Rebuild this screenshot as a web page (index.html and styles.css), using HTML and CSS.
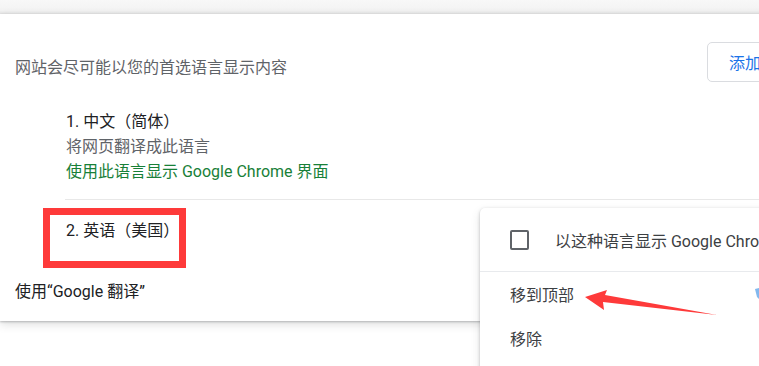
FILE: index.html
```html
<!DOCTYPE html>
<html lang="zh-CN">
<head>
    <meta charset="UTF-8">
    <title>语言</title>
    <link rel="stylesheet" href="styles.css">
</head>
<body>

    <div class="top-shadow"></div>

    <!-- 语言设置卡片 -->
    <div class="card">
        <div class="card-head">
            <p class="desc">网站会尽可能以您的首选语言显示内容</p>
            <button class="add-btn">添加语言</button>
        </div>

        <div class="lang-item first">
            <div class="lang-name">1. 中文（简体）</div>
            <div class="lang-sub">将网页翻译成此语言</div>
            <div class="lang-ui">使用此语言显示 Google Chrome 界面</div>
        </div>

        <div class="lang-item second">
            <div class="lang-name">2. 英语（美国）</div>
        </div>

        <div class="translate-row">使用“Google 翻译”</div>
    </div>

    <h2 class="next-title">拼写检查</h2>

    <!-- 红框标注 -->
    <div class="mark-box"></div>

    <!-- 下拉菜单 -->
    <div class="menu">
        <div class="menu-check">
            <span class="checkbox"></span>
            <span>以这种语言显示 Google Chrome</span>
        </div>
        <div class="menu-list">
            <div class="menu-item">移到顶部</div>
            <div class="menu-item">移除</div>
        </div>
    </div>

    <!-- 箭头标注 -->
    <svg class="arrow" width="759" height="366" viewBox="0 0 759 366">
        <polygon points="585,297 607,290 605,295 717,315 603,302 604,310" fill="#fe3a3a"/>
        <polygon points="755,289 759,288 759,299 757,297" fill="#82b8ee"/>
    </svg>

</body>
</html>
```

FILE: styles.css
```css
html, body {
    margin: 0;
    height: 366px;
    overflow: hidden;
}

body {
    position: relative;
    background-color: #fff;
    font-family: Roboto, "Noto Sans CJK SC", sans-serif;
    font-size: 16px;
    color: #202124;
}

.top-shadow {
    height: 14px;
    background: linear-gradient(#f8f8f8, #f3f3f3 75%, #e4e4e4);
}

.card {
    width: 817px;
    padding-top: 28px;
    background-color: #fff;
    box-shadow: 0 1px 2px rgba(60, 64, 67, 0.3), 0 3px 9px rgba(60, 64, 67, 0.18);
}

.card-head {
    display: flex;
    justify-content: space-between;
    align-items: flex-start;
    padding-left: 15px;
}

.desc {
    margin: 12.5px 0 0 0;
    line-height: 25px;
    color: #5f6368;
}

.add-btn {
    height: 40px;
    width: 110px;
    padding: 0 0 0 21px;
    text-align: left;
    background-color: #fff;
    border: 1px solid #dadce0;
    border-radius: 5px;
    color: #1a73e8;
    font-family: inherit;
    font-size: 16px;
}

.lang-item {
    margin-left: 65px;
    padding-left: 1px;
    line-height: 25px;
}

.lang-item.first {
    padding-top: 26.5px;
    padding-bottom: 15.5px;
    border-bottom: 1px solid #e8e8e8;
}

.lang-item.second {
    padding-top: 17.5px;
    padding-bottom: 14px;
}

.lang-sub {
    color: #5f6368;
}

.lang-ui {
    color: #188038;
}

.translate-row {
    padding: 22px 0 17.5px 15px;
    line-height: 25px;
}

.next-title {
    margin: 41px 0 0 1px;
    font-size: 16px;
    font-weight: 500;
}

.mark-box {
    position: absolute;
    left: 43px;
    top: 208px;
    width: 129px;
    height: 46px;
    border: 7px solid #fe3a3a;
}

.menu {
    position: absolute;
    left: 480px;
    top: 208px;
    width: 320px;
    height: 200px;
    background-color: #fff;
    border-radius: 5px;
    box-shadow: 0 1px 3px rgba(60, 64, 67, 0.3), 0 4px 10px rgba(60, 64, 67, 0.15);
    color: #3c4043;
}

.menu-check {
    display: flex;
    align-items: center;
    height: 63px;
    padding-left: 30px;
    border-bottom: 1px solid #e8eaed;
    white-space: nowrap;
}

.checkbox {
    width: 15px;
    height: 16px;
    border: 2px solid #5f6368;
    border-radius: 2px;
    margin-right: 26px;
}

.menu-list {
    padding-top: 2px;
}

.menu-item {
    height: 44px;
    line-height: 44px;
    padding-left: 30px;
}

.arrow {
    position: absolute;
    left: 0;
    top: 0;
}
```
